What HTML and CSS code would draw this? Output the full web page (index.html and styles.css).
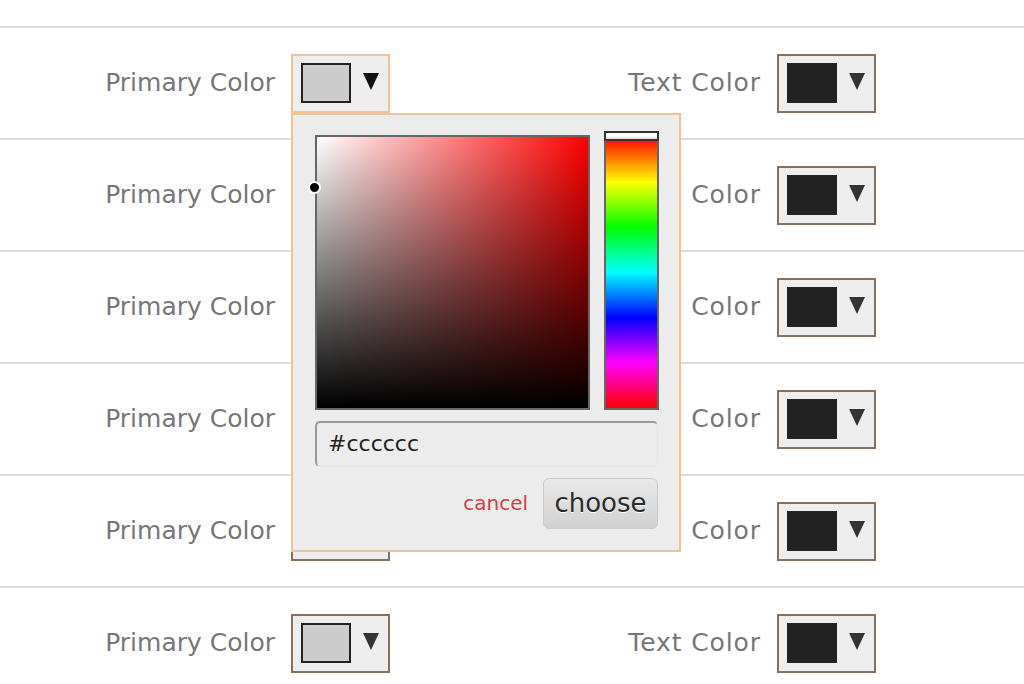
FILE: index.html
```html
<!DOCTYPE html>
<html>
<head>
<meta charset="utf-8">
<link rel="stylesheet" href="styles.css">
</head>
<body>
<div class="list">
  <div class="row">
    <div class="field first">
      <span class="label">Primary Color</span>
      <div class="pick active">
        <span class="swatch light"></span><span class="arrow"></span>
        <div class="popup">
          <div class="pads">
            <div class="sv">
              <span class="dot"></span>
            </div>
            <div class="hue">
              <span class="hue-handle"></span>
            </div>
          </div>
          <div class="hex">#cccccc</div>
          <div class="actions">
            <span class="cancel">cancel</span>
            <span class="choose">choose</span>
          </div>
        </div>
      </div>
    </div>
    <div class="field second">
      <span class="label wide">Text Color</span>
      <div class="pick"><span class="swatch dark"></span><span class="arrow"></span></div>
    </div>
  </div>
  <div class="row">
    <div class="field first">
      <span class="label">Primary Color</span>
      <div class="pick"><span class="swatch light"></span><span class="arrow"></span></div>
    </div>
    <div class="field second">
      <span class="label wide">Text Color</span>
      <div class="pick"><span class="swatch dark"></span><span class="arrow"></span></div>
    </div>
  </div>
  <div class="row">
    <div class="field first">
      <span class="label">Primary Color</span>
      <div class="pick"><span class="swatch light"></span><span class="arrow"></span></div>
    </div>
    <div class="field second">
      <span class="label wide">Text Color</span>
      <div class="pick"><span class="swatch dark"></span><span class="arrow"></span></div>
    </div>
  </div>
  <div class="row">
    <div class="field first">
      <span class="label">Primary Color</span>
      <div class="pick"><span class="swatch light"></span><span class="arrow"></span></div>
    </div>
    <div class="field second">
      <span class="label wide">Text Color</span>
      <div class="pick"><span class="swatch dark"></span><span class="arrow"></span></div>
    </div>
  </div>
  <div class="row">
    <div class="field first">
      <span class="label">Primary Color</span>
      <div class="pick"><span class="swatch light"></span><span class="arrow"></span></div>
    </div>
    <div class="field second">
      <span class="label wide">Text Color</span>
      <div class="pick"><span class="swatch dark"></span><span class="arrow"></span></div>
    </div>
  </div>
  <div class="row">
    <div class="field first">
      <span class="label">Primary Color</span>
      <div class="pick"><span class="swatch light"></span><span class="arrow"></span></div>
    </div>
    <div class="field second">
      <span class="label wide">Text Color</span>
      <div class="pick"><span class="swatch dark"></span><span class="arrow"></span></div>
    </div>
  </div>
</div>
</body>
</html>
```
FILE: styles.css
```css
html, body {
  margin: 0;
  padding: 0;
  background: #fff;
  overflow: hidden;
  font-family: "DejaVu Sans", "Liberation Sans", sans-serif;
}
.list {
  padding-top: 26px;
}
.row {
  border-top: 2px solid #dedede;
  height: 110px;
  display: flex;
  align-items: center;
}
.field {
  display: flex;
  align-items: center;
  gap: 16px;
}
.field.first { width: 390px; }
.field.second { width: 486px; }
.label {
  flex: 1;
  text-align: right;
  font-size: 25px;
  color: #777;
  line-height: 30px;
}
.label.wide {
  letter-spacing: 0.9px;
}
.pick {
  position: relative;
  box-sizing: border-box;
  width: 99px;
  height: 59px;
  border: 2px solid #8c7055;
  background: #eeeeee;
  display: flex;
  align-items: center;
  padding: 0 8px;
  gap: 12px;
}
.pick.active {
  border-color: #f1c393;
  z-index: 5;
}
.swatch {
  box-sizing: border-box;
  width: 50px;
  height: 40px;
  border: 2px solid #222;
}
.swatch.light { background: #cccccc; }
.swatch.dark { background: #222222; }
.arrow {
  width: 0;
  height: 0;
  border-left: 8.5px solid transparent;
  border-right: 8.5px solid transparent;
  border-top: 17px solid #333;
  margin-top: -3px;
}
.pick.active .arrow { border-top-color: #111; }
.popup {
  position: absolute;
  left: -2px;
  top: calc(100% + 2px);
  box-sizing: border-box;
  width: 390px;
  border: 2px solid #f1c393;
  background: #ececec;
  padding: 20px 20px 21px 22px;
  z-index: 10;
}
.pads {
  display: flex;
  gap: 14px;
}
.sv {
  position: relative;
  box-sizing: border-box;
  width: 275px;
  height: 275px;
  border: 2px solid #666;
  background:
    linear-gradient(to top, #000, rgba(0,0,0,0)),
    linear-gradient(to right, #fff, #f00);
}
.dot {
  position: absolute;
  left: -9px;
  top: 44px;
  box-sizing: border-box;
  width: 13px;
  height: 13px;
  border-radius: 50%;
  background: #000;
  border: 2px solid #fff;
}
.hue {
  position: relative;
  box-sizing: border-box;
  width: 55px;
  height: 275px;
  border: 2px solid #666;
  background: linear-gradient(to bottom, #f00 0%, #ff0 16.67%, #0f0 33.33%, #0ff 50%, #00f 66.67%, #f0f 83.33%, #f00 100%);
}
.hue-handle {
  position: absolute;
  left: -2px;
  right: -2px;
  top: -6px;
  height: 10px;
  box-sizing: border-box;
  border: 2px solid #333;
  background: linear-gradient(to bottom, #fff 0%, #fff 45%, rgba(255,255,255,0.8) 100%);
}
.hex {
  box-sizing: border-box;
  margin-top: 11px;
  width: 343px;
  height: 46px;
  border-top: 2px solid #999;
  border-left: 2px solid #999;
  border-right: 1px solid #e6e6e6;
  border-bottom: 1px solid #e6e6e6;
  border-radius: 5px;
  padding-left: 11px;
  font-size: 22px;
  line-height: 42px;
  color: #222;
}
.actions {
  margin-top: 11px;
  display: flex;
  justify-content: flex-end;
  align-items: center;
  gap: 15px;
  padding-right: 1px;
}
.cancel {
  font-size: 20px;
  color: #d63c3c;
}
.choose {
  box-sizing: border-box;
  width: 115px;
  height: 51px;
  border: 1px solid #cacaca;
  border-radius: 6px;
  background: linear-gradient(to bottom, #e9e9e9, #d1d1d1);
  font-size: 26px;
  line-height: 48px;
  text-align: center;
  color: #2a2a2a;
  text-shadow: 0 1px 0 #fff;
}
```
